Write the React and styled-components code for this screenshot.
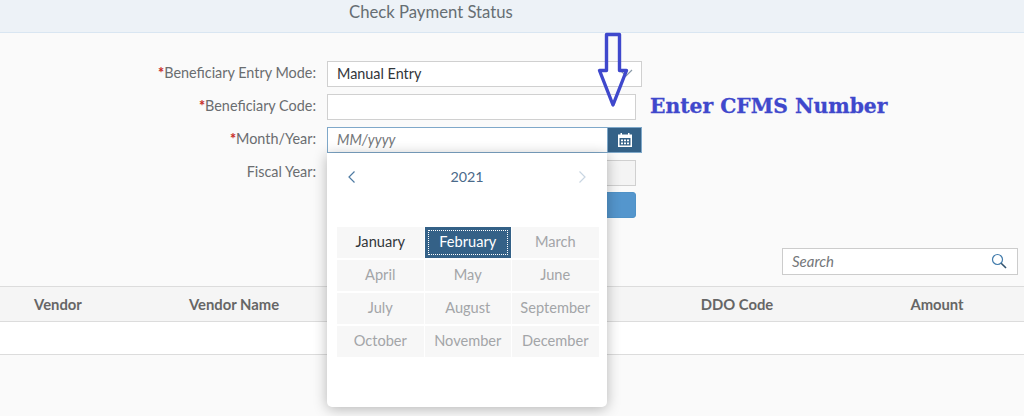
import React from "react";
import styled, { createGlobalStyle } from "styled-components";

const GlobalStyle = createGlobalStyle`
  html, body {
    margin: 0;
    padding: 0;
    background: #fafafa;
  }
  body {
    font-family: Lato, "Open Sans", sans-serif;
    overflow: hidden;
  }
  * {
    box-sizing: border-box;
  }
`;

const Page = styled.div`
  position: relative;
  width: 1024px;
  height: 416px;
  overflow: hidden;
  background: #fafafa;
`;

const Header = styled.header`
  height: 33px;
  padding-left: 349px;
  background: #edf2f7;
  border-bottom: 1px solid #d9e6f2;
  color: #666e73;
  font-size: 16.7px;
  line-height: 25px;
`;

const Form = styled.form`
  display: flex;
  flex-direction: column;
  gap: 7px;
  padding-top: 28px;
`;

const Row = styled.div`
  display: grid;
  grid-template-columns: 316px 1fr;
  column-gap: 11px;
  height: 26px;
  align-items: center;
`;

const Label = styled.label`
  text-align: right;
  color: #6a6d70;
  font-size: 14.4px;
  line-height: 24px;
  padding-bottom: 2px;
  white-space: nowrap;
`;

const Req = styled.span`
  color: #c9302c;
  font-weight: 900;
`;

const Field = styled.div`
  position: relative;
  display: flex;
  width: ${(p) => (p.$wide ? "315px" : "309px")};
  height: 26px;
`;

const Input = styled.input`
  flex: 1;
  min-width: 0;
  height: 26px;
  padding: 0 9px 2px;
  border: 1px solid ${(p) => (p.$active ? "#7fa8c9" : "#d0d0d0")};
  border-radius: 0;
  background: ${(p) => (p.disabled ? "#f4f4f4" : "#fff")};
  color: #32363a;
  font-family: inherit;
  font-size: 14.4px;
  outline: none;
  &::placeholder {
    color: #74777a;
    font-style: italic;
  }
`;

const SelectArrow = styled.span`
  position: absolute;
  right: 9px;
  top: 7px;
  display: flex;
`;

const CalendarButton = styled.span`
  display: flex;
  align-items: center;
  justify-content: center;
  width: 34px;
  height: 26px;
  background: #346187;
  border: 1px solid #7fa8c9;
  border-left: 0;
`;

const SubmitButton = styled.button`
  width: 309px;
  height: 26px;
  margin-top: -1px;
  margin-left: 327px;
  border: 1px solid #4f92c7;
  border-radius: 3px;
  background: #5496cd;
`;

const Popup = styled.div`
  position: absolute;
  left: 0;
  top: 26px;
  z-index: 5;
  width: 280px;
  height: 254px;
  padding: 0 10px;
  background: #fff;
  border-radius: 0 0 5px 5px;
  box-shadow: 0 2px 14px rgba(0, 0, 0, 0.28);
`;

const PopupHead = styled.div`
  display: flex;
  align-items: center;
  justify-content: space-between;
  height: 47px;
  padding: 0 10px;
  color: #4a6a8a;
  font-size: 14.3px;
`;

const Months = styled.div`
  display: grid;
  grid-template-columns: repeat(3, 86.5px);
  grid-auto-rows: 31px;
  gap: 2px 1px;
  margin-top: 27px;
`;

const Month = styled.div`
  position: relative;
  display: flex;
  align-items: center;
  justify-content: center;
  padding-bottom: 2px;
  background: ${(p) => (p.$selected ? "#346187" : "#f7f7f7")};
  color: ${(p) => (p.$selected ? "#fff" : p.$current ? "#32363a" : "#a3a5a8")};
  font-size: 14.6px;
  ${(p) =>
    p.$selected &&
    `&::after {
      content: "";
      position: absolute;
      inset: 3px;
      border: 1px dotted #fff;
    }`}
`;

const Toolbar = styled.div`
  display: flex;
  justify-content: flex-end;
  padding: 30px 6px 11px 0;
`;

const Search = styled.div`
  display: flex;
  align-items: center;
  justify-content: space-between;
  width: 236px;
  height: 27px;
  padding: 0 10px 2px 9px;
  background: #fff;
  border: 1px solid #ccc;
  color: #74777a;
  font-size: 15px;
  font-style: italic;
`;

const TableHead = styled.div`
  display: grid;
  grid-template-columns: 116px 236px 272px 226px 174px;
  height: 36px;
  align-items: center;
  background: #f5f5f5;
  border-top: 1px solid #dcdcdc;
  border-bottom: 1px solid #dcdcdc;
`;

const Column = styled.div`
  padding-bottom: 1px;
  text-align: center;
  color: #666;
  font-size: 14.8px;
  font-weight: 700;
`;

const TableRow = styled.div`
  height: 33px;
  background: #fff;
  border-bottom: 1px solid #dcdcdc;
`;

const Annotation = styled.div`
  position: absolute;
  left: 650px;
  top: 94px;
  color: #3f48cc;
  font-family: "DejaVu Serif", serif;
  font-size: 20.3px;
  font-weight: bold;
  white-space: nowrap;
  -webkit-text-stroke: 0.3px #3f48cc;
`;

const ArrowMark = styled.svg`
  position: absolute;
  left: 590px;
  top: 25px;
  z-index: 6;
`;

const MONTHS = [
  "January",
  "February",
  "March",
  "April",
  "May",
  "June",
  "July",
  "August",
  "September",
  "October",
  "November",
  "December",
];

const Chevron = ({ dir, color }) => (
  <svg width="10" height="14" viewBox="0 0 10 14" fill="none">
    <path
      d={dir === "left" ? "M7.5 1.5 2 7l5.5 5.5" : "M2.5 1.5 8 7l-5.5 5.5"}
      stroke={color}
      strokeWidth="1.2"
    />
  </svg>
);

const CalendarIcon = () => (
  <svg width="16" height="16" viewBox="0 0 16 16">
    <path
      fill="#fff"
      fillRule="evenodd"
      d="M1 2.5h2.5V1h1.5v1.5h6V1h1.5v1.5H15V15H1zM2.5 6v7.5h11V6z"
    />
    <path
      fill="#fff"
      d="M4 7.5h2v1.7H4zM7 7.5h2v1.7H7zM10 7.5h2v1.7h-2zM4 10.5h2v1.7H4zM7 10.5h2v1.7H7zM10 10.5h2v1.7h-2z"
    />
  </svg>
);

const SearchIcon = () => (
  <svg width="16" height="16" viewBox="0 0 16 16" fill="none">
    <circle cx="6.5" cy="6.5" r="5" stroke="#427cac" strokeWidth="1.2" />
    <path d="M10.2 10.2 15 15" stroke="#32536e" strokeWidth="1.6" />
  </svg>
);

const App = () => {
  return (
    <Page>
      <GlobalStyle />
      <Header>Check Payment Status</Header>
      <Form>
        <Row>
          <Label>
            <Req>*</Req>Beneficiary Entry Mode:
          </Label>
          <Field $wide>
            <Input readOnly value="Manual Entry" />
            <SelectArrow>
              <svg width="14" height="10" viewBox="0 0 14 10" fill="none">
                <path d="M1 2l6 6 6-6" stroke="#8a9aa8" strokeWidth="1.2" />
              </svg>
            </SelectArrow>
          </Field>
        </Row>
        <Row>
          <Label>
            <Req>*</Req>Beneficiary Code:
          </Label>
          <Field>
            <Input readOnly />
          </Field>
        </Row>
        <Row>
          <Label>
            <Req>*</Req>Month/Year:
          </Label>
          <Field $wide>
            <Input $active readOnly placeholder="MM/yyyy" />
            <CalendarButton>
              <CalendarIcon />
            </CalendarButton>
            <Popup>
              <PopupHead>
                <Chevron dir="left" color="#4f7ba3" />
                <span>2021</span>
                <Chevron dir="right" color="#c9d6e2" />
              </PopupHead>
              <Months>
                {MONTHS.map((m, i) => (
                  <Month key={m} $current={i === 0} $selected={i === 1}>
                    {m}
                  </Month>
                ))}
              </Months>
            </Popup>
          </Field>
        </Row>
        <Row>
          <Label>Fiscal Year:</Label>
          <Field>
            <Input disabled />
          </Field>
        </Row>
        <SubmitButton type="button" aria-label="Submit" />
      </Form>
      <Toolbar>
        <Search>
          <span>Search</span>
          <SearchIcon />
        </Search>
      </Toolbar>
      <TableHead>
        <Column>Vendor</Column>
        <Column>Vendor Name</Column>
        <Column />
        <Column>DDO Code</Column>
        <Column>Amount</Column>
      </TableHead>
      <TableRow />
      <Annotation>Enter CFMS Number</Annotation>
      <ArrowMark width="50" height="90" viewBox="0 0 50 90" fill="none">
        <path
          d="M16.5 9.500h13v36h7L23 80 9.500 45.500h7z"
          stroke="#3f48cc"
          strokeWidth="3.4"
          strokeLinejoin="round"
        />
      </ArrowMark>
    </Page>
  );
};

export default App;
